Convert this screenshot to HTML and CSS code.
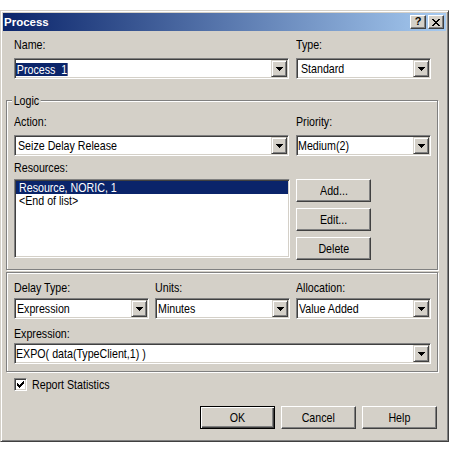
FILE: index.html
```html
<!DOCTYPE html>
<html>
<head>
<meta charset="utf-8">
<title>Process</title>
<link rel="stylesheet" href="styles.css">
</head>
<body>
<div class="window">
  <div class="titlebar">
    <span class="title">Process</span>
    <div class="tbtns">
      <span class="tbtn"><span class="q">?</span></span>
      <span class="tbtn"><svg width="8" height="7" viewBox="0 0 8 7"><path d="M0 0h2v1H0zM6 0h2v1H6zM1 1h2v1H1zM5 1h2v1H5zM2 2h4v1H2zM3 3h2v1H3zM2 4h4v1H2zM1 5h2v1H1zM5 5h2v1H5zM0 6h2v1H0zM6 6h2v1H6z" fill="#000"/></svg></span>
    </div>
  </div>
  <div class="content">
    <div class="grid2 top">
      <div class="lbl">Name:</div>
      <div class="lbl">Type:</div>
      <div class="combo"><span class="val p0"><span class="sel">Process_1</span></span><span class="drop"><svg width="7" height="4" viewBox="0 0 7 4"><path d="M0 0h7v1H0zM1 1h5v1H1zM2 2h3v1H2zM3 3h1v1H3z" fill="#000"/></svg></span></div>
      <div class="combo"><span class="val p3"><span class="t">Standard</span></span><span class="drop"><svg width="7" height="4" viewBox="0 0 7 4"><path d="M0 0h7v1H0zM1 1h5v1H1zM2 2h3v1H2zM3 3h1v1H3z" fill="#000"/></svg></span></div>
    </div>

    <div class="group logic">
      <span class="legend">Logic</span>
      <div class="grid2">
        <div class="lbl">Action:</div>
        <div class="lbl">Priority:</div>
        <div class="combo"><span class="val p2"><span class="t">Seize Delay Release</span></span><span class="drop"><svg width="7" height="4" viewBox="0 0 7 4"><path d="M0 0h7v1H0zM1 1h5v1H1zM2 2h3v1H2zM3 3h1v1H3z" fill="#000"/></svg></span></div>
        <div class="combo"><span class="val p0"><span class="t">Medium(2)</span></span><span class="drop"><svg width="7" height="4" viewBox="0 0 7 4"><path d="M0 0h7v1H0zM1 1h5v1H1zM2 2h3v1H2zM3 3h1v1H3z" fill="#000"/></svg></span></div>
      </div>
      <div class="lbl res-label">Resources:</div>
      <div class="res-row">
        <div class="listbox">
          <div class="item selected"><span class="t">Resource, NORIC, 1</span></div>
          <div class="item"><span class="t">&lt;End of list&gt;</span></div>
        </div>
        <div class="btncol">
          <div class="btn"><span class="t c">Add...</span></div>
          <div class="btn"><span class="t c">Edit...</span></div>
          <div class="btn"><span class="t c">Delete</span></div>
        </div>
      </div>
    </div>

    <div class="group delay">
      <div class="grid3">
        <div class="lbl">Delay Type:</div>
        <div class="lbl">Units:</div>
        <div class="lbl">Allocation:</div>
        <div class="combo"><span class="val p1"><span class="t">Expression</span></span><span class="drop"><svg width="7" height="4" viewBox="0 0 7 4"><path d="M0 0h7v1H0zM1 1h5v1H1zM2 2h3v1H2zM3 3h1v1H3z" fill="#000"/></svg></span></div>
        <div class="combo"><span class="val p1"><span class="t">Minutes</span></span><span class="drop"><svg width="7" height="4" viewBox="0 0 7 4"><path d="M0 0h7v1H0zM1 1h5v1H1zM2 2h3v1H2zM3 3h1v1H3z" fill="#000"/></svg></span></div>
        <div class="combo"><span class="val p1"><span class="t">Value Added</span></span><span class="drop"><svg width="7" height="4" viewBox="0 0 7 4"><path d="M0 0h7v1H0zM1 1h5v1H1zM2 2h3v1H2zM3 3h1v1H3z" fill="#000"/></svg></span></div>
      </div>
      <div class="lbl expr-label">Expression:</div>
      <div class="combo expr"><span class="val p0"><span class="t">EXPO( data(TypeClient,1) )</span></span><span class="drop"><svg width="7" height="4" viewBox="0 0 7 4"><path d="M0 0h7v1H0zM1 1h5v1H1zM2 2h3v1H2zM3 3h1v1H3z" fill="#000"/></svg></span></div>
    </div>

    <div class="chkrow">
      <span class="chk"><svg width="9" height="9" viewBox="0 0 9 9"><path d="M7 1h1v1H7zM6 2h2v1H6zM1 3h1v1H1zM5 3h3v1H5zM1 4h2v1H1zM4 4h3v1H4zM1 5h5v1H1zM2 6h3v1H2zM3 7h1v1H3z" fill="#000"/></svg></span>
      <span class="chklabel">Report Statistics</span>
    </div>

    <div class="btnrow">
      <div class="btn default"><span class="t c">OK</span></div>
      <div class="btn"><span class="t c">Cancel</span></div>
      <div class="btn"><span class="t c">Help</span></div>
    </div>
  </div>
</div>
</body>
</html>
```
FILE: styles.css
```css
* { box-sizing: border-box; }
html, body { margin: 0; padding: 0; background: #fff; }
body {
  font-family: "Liberation Sans", Arial, sans-serif;
  font-size: 13px;
  color: #000;
}
.window {
  margin-top: 10px;
  width: 449px;
  height: 432px;
  background: #d4d0c8;
  border: 1px solid;
  border-color: #d4d0c8 #404040 #404040 #d4d0c8;
  box-shadow: inset 1px 1px #fff, inset -1px -1px #808080;
  padding: 2px;
}
.titlebar {
  height: 18px;
  background: linear-gradient(to right, #0a246a, #a6caf0);
  display: flex;
  align-items: center;
  justify-content: space-between;
  padding: 0 2px 0 1px;
}
.title {
  font-weight: bold;
  font-size: 11.5px;
  color: #fff;
  line-height: 18px;
}
.tbtns { display: flex; gap: 2px; }
.tbtn {
  width: 16px;
  height: 14px;
  background: #d4d0c8;
  border: 1px solid;
  border-color: #fff #404040 #404040 #fff;
  box-shadow: inset -1px -1px #808080;
  display: flex;
  align-items: center;
  justify-content: center;
}
.tbtn svg { display: block; }
.q {
  font-weight: bold;
  font-size: 11px;
  line-height: 11px;
  margin-top: -1px;
}
/* narrow UI font: Arial-metric face condensed to Arial Narrow proportions */
.t, .lbl, .legend, .chklabel, .val .sel {
  transform: scaleX(0.82);
  transform-origin: 0 50%;
  white-space: nowrap;
}
.t { display: inline-block; }
.t.c { transform-origin: 50% 50%; }
.lbl { line-height: 15px; height: 15px; }
.grid2 {
  display: grid;
  grid-template-columns: 275px 135px;
  column-gap: 7px;
  row-gap: 6px;
}
.top { padding: 6px 0 0 11px; }
.combo {
  display: flex;
  height: 21px;
  background: #fff;
  border: 1px solid;
  border-color: #808080 #fff #fff #808080;
  box-shadow: inset 1px 1px #404040, inset -1px -1px #d4d0c8;
  padding: 1px;
}
.val {
  flex: 1;
  min-width: 0;
  white-space: nowrap;
  overflow: hidden;
  line-height: 16px;
  padding-top: 1px;
}
.p0 { padding-left: 0; }
.p1 { padding-left: 1px; }
.p2 { padding-left: 2px; }
.p3 { padding-left: 3px; }
.val .sel {
  display: inline-block;
  background: #0a246a;
  color: #fff;
  height: 13px;
  line-height: 13px;
  padding: 0 1px;
  margin-top: 2px;
  vertical-align: top;
}
.drop {
  flex: none;
  width: 16px;
  height: 17px;
  background: #d4d0c8;
  border: 1px solid;
  border-color: #d4d0c8 #404040 #404040 #d4d0c8;
  box-shadow: inset 1px 1px #fff, inset -1px -1px #808080;
  display: flex;
  align-items: center;
  justify-content: center;
}
.drop svg { display: block; }
.group {
  position: relative;
  width: 432px;
  margin-left: 3px;
  border: 1px solid #808080;
  box-shadow: 1px 1px #fff, inset 1px 1px #fff;
}
.logic { margin-top: 21px; padding: 13px 0 9px 7px; }
.legend {
  position: absolute;
  top: -8px;
  left: 5px;
  padding: 0 2px;
  background: #d4d0c8;
  line-height: 15px;
}
.res-label { margin-top: 4px; }
.res-row { margin-top: 4px; display: flex; gap: 6px; }
.listbox {
  width: 276px;
  height: 79px;
  background: #fff;
  border: 1px solid;
  border-color: #808080 #fff #fff #808080;
  box-shadow: inset 1px 1px #404040, inset -1px -1px #d4d0c8;
  padding: 1px;
}
.item { height: 13px; line-height: 13px; padding-left: 3px; white-space: nowrap; overflow: hidden; }
.item .t { vertical-align: top; }
.item.selected { background: #0a246a; color: #fff; }
.btncol { display: flex; flex-direction: column; gap: 6px; }
.btn {
  width: 75px;
  height: 23px;
  background: #d4d0c8;
  border: 1px solid;
  border-color: #fff #404040 #404040 #fff;
  box-shadow: inset -1px -1px #808080;
  display: flex;
  align-items: center;
  justify-content: center;
  line-height: 15px;
}
.btn.default {
  border-color: #000;
  box-shadow: inset 1px 1px #fff, inset -1px -1px #404040, inset -2px -2px #808080;
}
.delay { margin-top: 2px; padding: 7px 0 7px 7px; }
.grid3 {
  display: grid;
  grid-template-columns: 135px 135px 135px;
  column-gap: 6px;
  row-gap: 3px;
}
.expr-label { margin-top: 7px; }
.combo.expr { margin-top: 2px; width: 417px; }
.chkrow {
  margin: 6px 0 0 11px;
  display: flex;
  align-items: center;
  gap: 5px;
  height: 13px;
}
.chk {
  flex: none;
  width: 13px;
  height: 13px;
  background: #fff;
  border: 1px solid;
  border-color: #808080 #fff #fff #808080;
  box-shadow: inset 1px 1px #404040, inset -1px -1px #d4d0c8;
  padding: 1px;
}
.chk svg { display: block; }
.chklabel { line-height: 15px; }
.btnrow {
  margin-top: 15px;
  display: flex;
  justify-content: flex-end;
  gap: 6px;
  padding-right: 9px;
}
```
